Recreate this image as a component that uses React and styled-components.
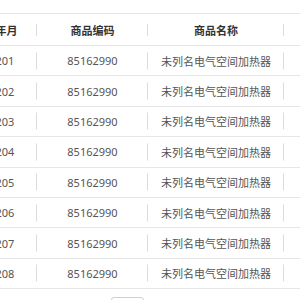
import React from "react";
import styled, { createGlobalStyle } from "styled-components";

const Global = createGlobalStyle`
  html, body { margin: 0; padding: 0; background: #fff; }
  body { font-family: "Noto Sans", "Noto Sans CJK SC", sans-serif; }
`;

const Viewport = styled.div`
  width: 300px;
  height: 300px;
  overflow: hidden;
  background: #fff;
  padding-top: 13px;
  box-sizing: border-box;
`;

const Table = styled.div`
  margin-left: -46px;
  width: 420px;
  border-top: 1px solid #e6e6e6;
`;

const Row = styled.div`
  display: grid;
  grid-template-columns: 83px 111px 136px 90px;
  height: ${(p) => (p.$head ? "31px" : "29.4px")};
  border-bottom: 1px solid #e6e6e6;
`;

const Cell = styled.div`
  position: relative;
  display: flex;
  align-items: center;
  justify-content: center;
  font-size: 11px;
  font-weight: ${(p) => (p.$head ? 700 : 400)};
  color: ${(p) => (p.$head ? "#333" : "#555")};
  white-space: nowrap;
  overflow: hidden;
  &::after {
    content: "";
    position: absolute;
    right: 0;
    top: 50%;
    width: 1px;
    height: ${(p) => (p.$head ? "12px" : "17px")};
    transform: translateY(-50%);
    background: #dcdcdc;
  }
`;

const Footer = styled.div`
  display: flex;
  padding: 8px 0 0 111px;
`;

const PageBtn = styled.div`
  width: 31px;
  height: 24px;
  border: 1px solid #cfcfcf;
  border-radius: 3px;
  background: #fff;
`;

const months = ["202201", "202202", "202203", "202204", "202205", "202206", "202207", "202208"];

export default function App() {
  return (
    <>
      <Global />
      <Viewport>
        <Table>
          <Row $head>
            <Cell $head>所属年月</Cell>
            <Cell $head>商品编码</Cell>
            <Cell $head>商品名称</Cell>
            <Cell $head>计量单位</Cell>
          </Row>
          {months.map((m) => (
            <Row key={m}>
              <Cell>{m}</Cell>
              <Cell>85162990</Cell>
              <Cell>未列名电气空间加热器</Cell>
              <Cell>台</Cell>
            </Row>
          ))}
        </Table>
        <Footer>
          <PageBtn />
        </Footer>
      </Viewport>
    </>
  );
}
